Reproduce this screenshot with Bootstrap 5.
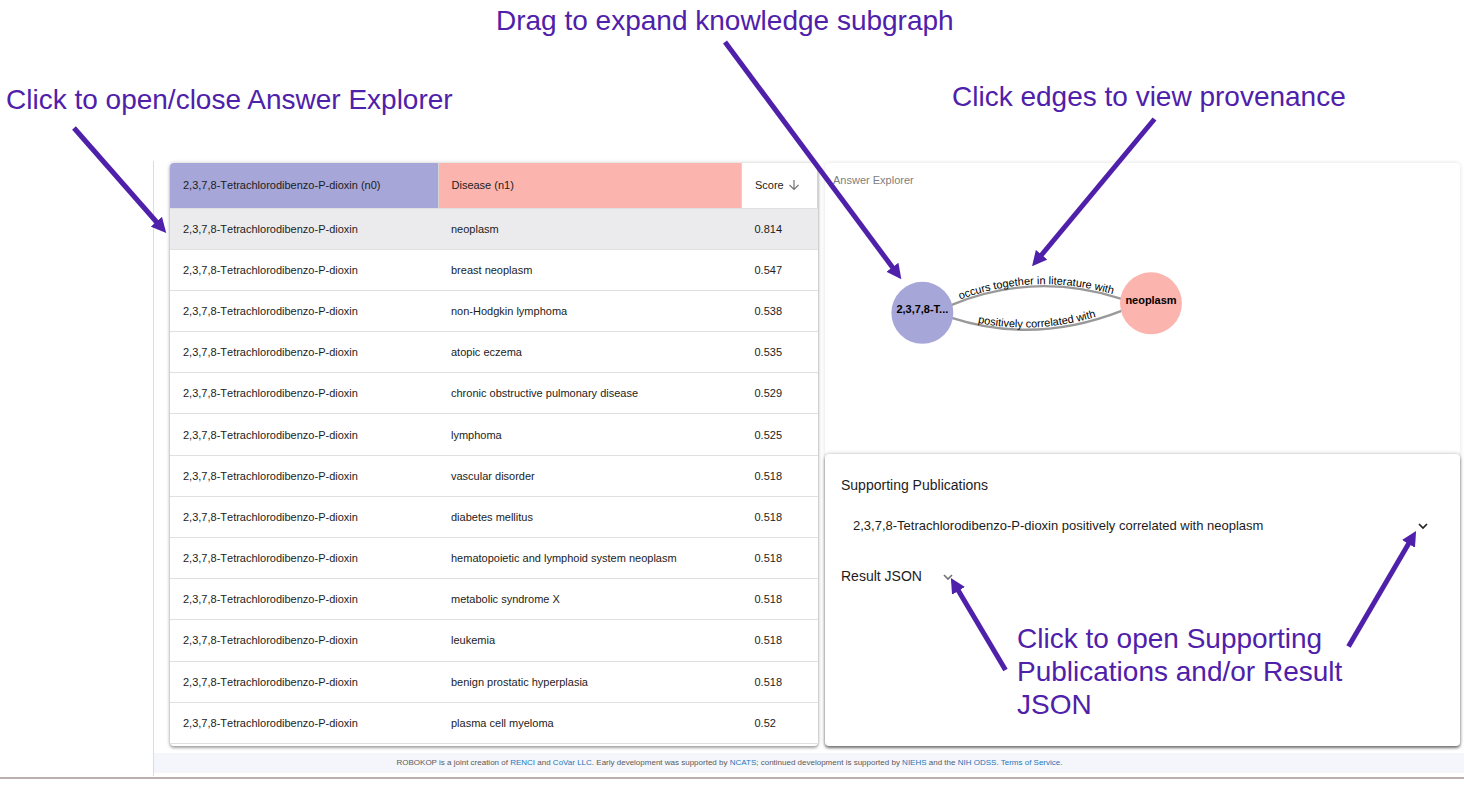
<!DOCTYPE html>
<html lang="en">
<head>
<meta charset="utf-8">
<meta name="viewport" content="width=device-width, initial-scale=1">
<title>ROBOKOP answer guide</title>
<link href="https://cdn.jsdelivr.net/npm/bootstrap@5.3.0/dist/css/bootstrap.min.css" rel="stylesheet">
<style>
  body { font-family: "Liberation Sans", Arial, sans-serif; font-size: 11px; color: #1c1c1c; background: #fff; }
  .callout { font-size: 28px; line-height: 33px; color: #4f20aa; margin: 0; }
  .guide-head { height: 161px; padding-top: 4px; }
  .callout-first { padding-left: 496px; }
  .callout-pair { padding: 43px 0 0 6px; }
  .callout-pair .callout:first-child { flex: 0 0 946px; padding-top: 3px; }
  .app { margin-left: 153px; border-left: 1px solid #dcdcde; padding-bottom: 3px; }
  .app-body { padding: 2px 4px 7px 16px; gap: 7px; }
  .answers { flex: 648 1 0; min-width: 0; border-radius: 4px; overflow: hidden; padding-bottom: 2px; box-shadow: 0 2px 3px rgba(0,0,0,.3), 0 0 4px rgba(0,0,0,.2); }
  .explorer { flex: 635 1 0; min-width: 0; }
  .answer-table { height: 581px; margin: 0; table-layout: fixed; line-height: 16px; font-kerning: none; }
  .answer-table > :not(caption) > * > * { padding: 0 13px; vertical-align: middle; border-bottom: 1px solid #e0e0e0; color: #1c1c1c; font-weight: 400; height: 41px; }
  .answer-table > thead > tr > th { height: 45px; border-right: 1px solid #d5d5d8; }
  .answer-table > thead > tr > .head-source { background: #a7a6d8; width: 268px; }
  .answer-table > thead > tr > .head-disease { background: #fbb4ae; }
  .answer-table > thead > tr > .head-score { width: 76px; }
  .answer-table > tbody > .picked > td { background: #ebebed; }
  .bare { border: 0; background: none; padding: 0; color: inherit; font: inherit; text-align: left; }
  .graph-panel { height: 291px; box-shadow: 0 0 4px rgba(0,0,0,.13); border-radius: 4px 4px 0 0; }
  .graph-title { color: #808080; font-size: 11px; line-height: 16px; padding: 9px 8px 0; margin: 0; }
  .details { flex: 1 1 auto; position: relative; background: #fff; border-radius: 4px; padding: 21px 16px 0; box-shadow: 0 2px 3px rgba(0,0,0,.5), 0 0 4px rgba(0,0,0,.25); }
  .details h2 { font-size: 14px; line-height: 20px; font-weight: 400; margin: 0; }
  .publication { font-size: 13px; line-height: 20px; margin: 21px 0 30px; padding: 0 15px 0 12px; }
  .result-line { gap: 20px; }
  .details .callout { margin: 36px 96px 0 176px; }
  .credits { background: #f4f6fb; font-size: 8px; line-height: 20px; height: 20px; color: #5a5a5a; padding-right: 159px; }
  .credits a { color: #2577b8; text-decoration: none; }
  .rule-end { height: 2px; background: #bcb0ae; margin-top: 1px; }
  .arrows { position: absolute; top: 0; left: 0; pointer-events: none; z-index: 5; }
</style>
</head>
<body class="position-relative">
<header class="guide-head">
  <p class="callout callout-first">Drag to expand knowledge subgraph</p>
  <div class="callout-pair d-flex">
    <p class="callout">Click to open/close Answer Explorer</p>
    <p class="callout">Click edges to view provenance</p>
  </div>
</header>
<div class="app">
  <main class="app-body d-flex">
    <section class="answers">
      <table class="table answer-table">
        <thead>
          <tr>
            <th scope="col" class="head-source">2,3,7,8-Tetrachlorodibenzo-P-dioxin (n0)</th>
            <th scope="col" class="head-disease">Disease (n1)</th>
            <th scope="col" class="head-score"><button type="button" class="bare d-flex align-items-center gap-1 text-nowrap">Score
              <svg width="12" height="12" viewBox="0 0 12 12" fill="none" stroke="#757575" stroke-width="1.2" aria-hidden="true"><path d="M6 1v9.500M1.500 6 6 10.500 10.500 6"/></svg></button></th>
          </tr>
        </thead>
        <tbody>
          <tr class="picked"><td>2,3,7,8-Tetrachlorodibenzo-P-dioxin</td><td>neoplasm</td><td>0.814</td></tr>
          <tr><td>2,3,7,8-Tetrachlorodibenzo-P-dioxin</td><td>breast neoplasm</td><td>0.547</td></tr>
          <tr><td>2,3,7,8-Tetrachlorodibenzo-P-dioxin</td><td>non-Hodgkin lymphoma</td><td>0.538</td></tr>
          <tr><td>2,3,7,8-Tetrachlorodibenzo-P-dioxin</td><td>atopic eczema</td><td>0.535</td></tr>
          <tr><td>2,3,7,8-Tetrachlorodibenzo-P-dioxin</td><td>chronic obstructive pulmonary disease</td><td>0.529</td></tr>
          <tr><td>2,3,7,8-Tetrachlorodibenzo-P-dioxin</td><td>lymphoma</td><td>0.525</td></tr>
          <tr><td>2,3,7,8-Tetrachlorodibenzo-P-dioxin</td><td>vascular disorder</td><td>0.518</td></tr>
          <tr><td>2,3,7,8-Tetrachlorodibenzo-P-dioxin</td><td>diabetes mellitus</td><td>0.518</td></tr>
          <tr><td>2,3,7,8-Tetrachlorodibenzo-P-dioxin</td><td>hematopoietic and lymphoid system neoplasm</td><td>0.518</td></tr>
          <tr><td>2,3,7,8-Tetrachlorodibenzo-P-dioxin</td><td>metabolic syndrome X</td><td>0.518</td></tr>
          <tr><td>2,3,7,8-Tetrachlorodibenzo-P-dioxin</td><td>leukemia</td><td>0.518</td></tr>
          <tr><td>2,3,7,8-Tetrachlorodibenzo-P-dioxin</td><td>benign prostatic hyperplasia</td><td>0.518</td></tr>
          <tr><td>2,3,7,8-Tetrachlorodibenzo-P-dioxin</td><td>plasma cell myeloma</td><td>0.52</td></tr>
        </tbody>
      </table>
    </section>
    <section class="explorer d-flex flex-column">
      <div class="graph-panel">
        <h2 class="graph-title">Answer Explorer</h2>
        <svg class="d-block w-100" height="260" viewBox="825 188 636 260" preserveAspectRatio="xMinYMin meet" font-size="11" role="img" aria-label="Knowledge subgraph">
          <defs>
            <path id="edge-upper" d="M952 303Q1035 269 1122 297"/>
            <path id="edge-lower" d="M952 316Q1035 343 1122 308"/>
          </defs>
          <g fill="none" stroke="#999" stroke-width="2.300">
            <path d="M952 305Q1035 271 1122 299"/>
            <path d="M952 318Q1035 345 1122 311"/>
          </g>
          <circle cx="922.500" cy="313" r="31" fill="#a7a6d8"/>
          <circle cx="1151.500" cy="303.500" r="31" fill="#fbb4ae"/>
          <g text-anchor="middle" fill="#000">
            <text><textPath href="#edge-upper" startOffset="50%">occurs together in literature with</textPath></text>
            <text><textPath href="#edge-lower" startOffset="50%">positively correlated with</textPath></text>
            <text x="922.500" y="313" font-weight="700">2,3,7,8-T...</text>
            <text x="1151.500" y="304" font-weight="700">neoplasm</text>
          </g>
        </svg>
      </div>
      <div class="details">
        <h2>Supporting Publications</h2>
        <button type="button" class="bare publication d-flex w-100 justify-content-between align-items-center">
          <span>2,3,7,8-Tetrachlorodibenzo-P-dioxin positively correlated with neoplasm</span>
          <svg width="12" height="12" viewBox="0 0 12 12" fill="none" stroke="#222" stroke-width="1.700" aria-hidden="true"><path d="M2 4l4 4 4-4"/></svg>
        </button>
        <div class="result-line d-flex align-items-center">
          <h2>Result JSON</h2>
          <button type="button" class="bare d-flex" aria-label="Show result JSON"><svg width="12" height="12" viewBox="0 0 12 12" fill="none" stroke="#757575" stroke-width="1.700" aria-hidden="true"><path d="M2 5l4 4 4-4"/></svg></button>
        </div>
        <p class="callout">Click to open Supporting Publications and/or Result JSON</p>
      </div>
    </section>
  </main>
  <footer class="credits text-center">ROBOKOP is a joint creation of <a href="#">RENCI</a> and <a href="#">CoVar LLC</a>. Early development was supported by <a href="#">NCATS</a>; continued development is supported by <a href="#">NIEHS</a> and the <a href="#">NIH ODSS</a>. <a href="#">Terms of Service</a>.</footer>
</div>
<div class="rule-end"></div>
<svg class="arrows w-100" viewBox="0 0 1464 797" fill="none" stroke="#4f20aa" stroke-width="5" aria-hidden="true">
  <defs>
    <marker id="tip" markerUnits="userSpaceOnUse" markerWidth="16" markerHeight="16" refX="1" refY="8" orient="auto"><path d="M0 0.500 15 8 0 15.500z" fill="#4f20aa" stroke="none"/></marker>
  </defs>
  <path marker-end="url(#tip)" d="M74 128L157 222.500"/>
  <path marker-end="url(#tip)" d="M725 42L893 268"/>
  <path marker-end="url(#tip)" d="M1154.500 119L1041 255.500"/>
  <path marker-end="url(#tip)" d="M1005.500 670L958 590"/>
  <path marker-end="url(#tip)" d="M1348.500 646.500L1409 543"/>
</svg>
<script src="https://cdn.jsdelivr.net/npm/bootstrap@5.3.0/dist/js/bootstrap.bundle.min.js"></script>
</body>
</html>
